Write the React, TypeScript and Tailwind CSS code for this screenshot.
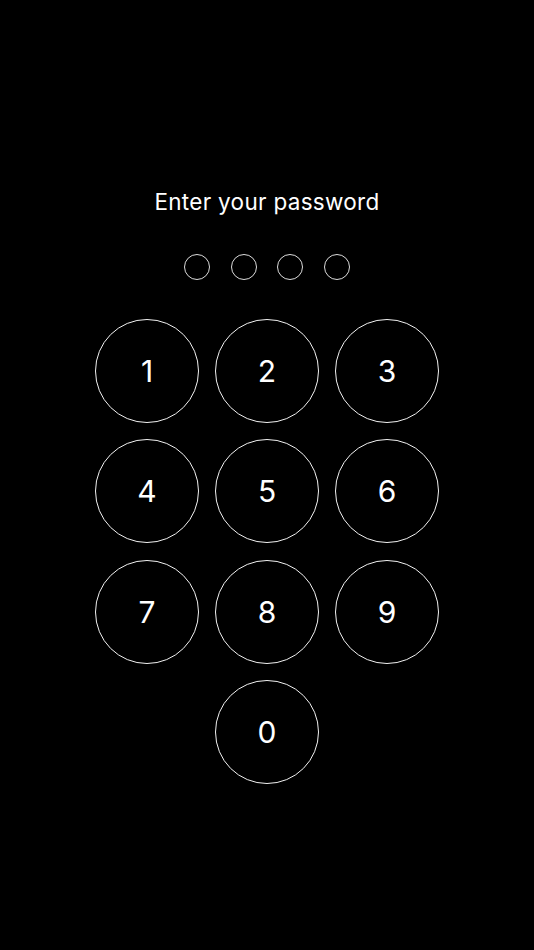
import { useState } from 'react';

const KEYS = ['1', '2', '3', '4', '5', '6', '7', '8', '9'];

export default function App() {
  const [code, setCode] = useState('');

  const press = (k: string) => {
    setCode((c) => (c.length >= 4 ? k : c + k));
  };

  return (
    <div
      className="min-h-screen w-full bg-black flex flex-col items-center pt-[188px] text-white"
      style={{ fontFamily: "Inter, 'Noto Sans', sans-serif" }}
    >
      <h1 className="text-[22.5px] leading-[28px] font-normal tracking-[0.3px]">Enter your password</h1>

      {/* Code dots */}
      <div className="mt-[38px] flex gap-[20.5px]">
        {[0, 1, 2, 3].map((i) => (
          <div
            key={i}
            className={`w-[26px] h-[26px] rounded-full border-[1.5px] border-[#dcdcdc] ${
              i < code.length ? 'bg-white' : ''
            }`}
          />
        ))}
      </div>

      {/* Keypad */}
      <div className="mt-[38.5px] grid grid-cols-[104px_104px_104px] gap-x-4 gap-y-[16.5px]">
        {KEYS.map((k) => (
          <button
            key={k}
            onClick={() => press(k)}
            className="w-[104px] h-[104px] rounded-full border-[1.5px] border-[#f2f2f2] flex items-center justify-center text-[30px] leading-none"
          >
            {k}
          </button>
        ))}
        <button
          onClick={() => press('0')}
          className="col-start-2 w-[104px] h-[104px] rounded-full border-[1.5px] border-[#f2f2f2] flex items-center justify-center text-[30px] leading-none"
        >
          0
        </button>
      </div>
    </div>
  );
}
